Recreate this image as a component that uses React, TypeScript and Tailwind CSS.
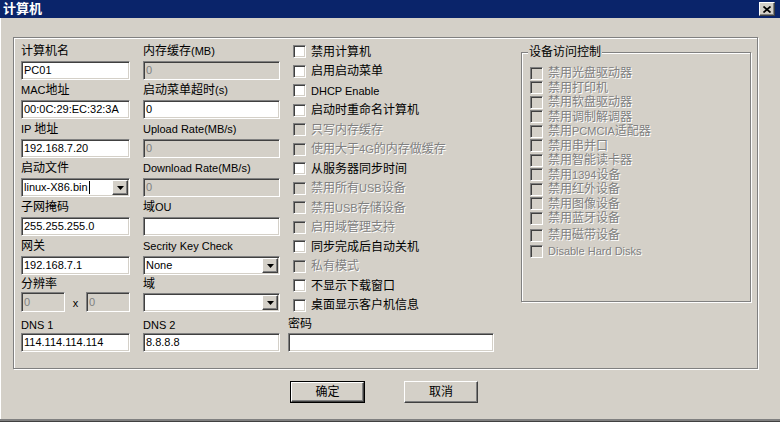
import React from 'react'

const CJK = /([\u2E80-\u9FFF\uFF00-\uFFEF]+)/

const sunken =
  'border border-t-[#808080] border-l-[#808080] border-b-white border-r-white shadow-[inset_1px_1px_0_#404040,inset_-1px_-1px_0_#d4d0c8]'
const raised =
  'border border-t-white border-l-white border-b-[#404040] border-r-[#404040] shadow-[inset_-1px_-1px_0_#808080]'
const etchedBox = 'border border-[#808080] shadow-[inset_1px_1px_0_#fff,1px_1px_0_#fff]'
const grayText = 'text-[#808080] [text-shadow:1px_1px_0_#fff]'

// Chinese in 12px, latin runs in 11px like the old Tahoma/SimSun mix
function T({ s }: { s: string }) {
  return (
    <span className="whitespace-pre">
      {s
        .split(CJK)
        .filter(Boolean)
        .map((p, i) =>
          CJK.test(p) ? (
            <span key={i}>{p}</span>
          ) : (
            <span key={i} className="text-[11px]">
              {p}
            </span>
          ),
        )}
    </span>
  )
}

function TextBox({
  value = '',
  disabled = false,
  className = '',
}: {
  value?: string
  disabled?: boolean
  className?: string
}) {
  return (
    <div
      className={`h-[19px] ${sunken} flex items-center pl-[2px] text-[11px] ${
        disabled ? 'bg-[#d4d0c8] text-[#808080]' : 'bg-white text-black'
      } ${className}`}
    >
      {value}
    </div>
  )
}

function Combo({ value = '', caret = false }: { value?: string; caret?: boolean }) {
  return (
    <div className={`h-[19px] ${sunken} bg-white flex items-stretch p-[1px]`}>
      <div className="flex-1 flex items-center pl-[1px] text-[11px]">
        {value}
        {caret && <span className="w-px h-[13px] bg-black ml-px" />}
      </div>
      <div className={`w-[16px] bg-[#d4d0c8] ${raised} flex items-center justify-center`}>
        <svg width="7" height="4" viewBox="0 0 7 4">
          <polygon points="0,0 7,0 3.5,4" fill="#000" />
        </svg>
      </div>
    </div>
  )
}

function Check({ disabled = false }: { disabled?: boolean }) {
  return (
    <span
      className={`w-[13px] h-[13px] shrink-0 ${sunken} ${disabled ? 'bg-[#d4d0c8]' : 'bg-white'}`}
    />
  )
}

type Cell = { label: string; control: React.ReactNode }

const rows: { lh: string; pad?: string; left: Cell; mid: Cell }[] = [
  {
    lh: 'h-[20px]',
    left: { label: '计算机名', control: <TextBox value="PC01" /> },
    mid: { label: '内存缓存(MB)', control: <TextBox value="0" disabled /> },
  },
  {
    lh: 'h-[20px]',
    left: { label: 'MAC地址', control: <TextBox value="00:0C:29:EC:32:3A" /> },
    mid: { label: '启动菜单超时(s)', control: <TextBox value="0" /> },
  },
  {
    lh: 'h-[20px]',
    left: { label: 'IP 地址', control: <TextBox value="192.168.7.20" /> },
    mid: { label: 'Upload Rate(MB/s)', control: <TextBox value="0" disabled /> },
  },
  {
    lh: 'h-[20px]',
    left: { label: '启动文件', control: <Combo value="linux-X86.bin" caret /> },
    mid: { label: 'Download Rate(MB/s)', control: <TextBox value="0" disabled /> },
  },
  {
    lh: 'h-[20px]',
    left: { label: '子网掩码', control: <TextBox value="255.255.255.0" /> },
    mid: { label: '域OU', control: <TextBox /> },
  },
  {
    lh: 'h-[20px]',
    left: { label: '网关', control: <TextBox value="192.168.7.1" /> },
    mid: { label: 'Secrity Key Check', control: <Combo value="None" /> },
  },
  {
    lh: 'h-[17px]',
    left: {
      label: '分辨率',
      control: (
        <div className="flex items-center h-[20px]">
          <TextBox value="0" disabled className="w-[44px] h-[20px]" />
          <span className="w-[21px] text-center text-[11px] pt-[3px]">x</span>
          <TextBox value="0" disabled className="w-[44px] h-[20px]" />
        </div>
      ),
    },
    mid: {
      label: '域',
      control: (
        <div className="pt-px">
          <Combo />
        </div>
      ),
    },
  },
  {
    lh: 'h-[21px]',
    pad: 'pt-[5px]',
    left: { label: 'DNS 1', control: <TextBox value="114.114.114.114" /> },
    mid: { label: 'DNS 2', control: <TextBox value="8.8.8.8" /> },
  },
]

const options: [string, boolean][] = [
  ['禁用计算机', true],
  ['启用启动菜单', true],
  ['DHCP Enable', true],
  ['启动时重命名计算机', true],
  ['只写内存缓存', false],
  ['使用大于4G的内存做缓存', false],
  ['从服务器同步时间', true],
  ['禁用所有USB设备', false],
  ['禁用USB存储设备', false],
  ['启用域管理支持', false],
  ['同步完成后自动关机', true],
  ['私有模式', false],
  ['不显示下载窗口', true],
  ['桌面显示客户机信息', true],
]

const devices = [
  '禁用光盘驱动器',
  '禁用打印机',
  '禁用软盘驱动器',
  '禁用调制解调器',
  '禁用PCMCIA适配器',
  '禁用串并口',
  '禁用智能读卡器',
  '禁用1394设备',
  '禁用红外设备',
  '禁用图像设备',
  '禁用蓝牙设备',
]

function Column({ side }: { side: 'left' | 'mid' }) {
  return (
    <div className={`flex flex-col ${side === 'left' ? 'w-[109px]' : 'w-[137px]'}`}>
      {rows.map((r, i) => {
        const c = r[side]
        return (
          <div key={i} className="flex flex-col">
            <div className={`${r.lh} ${r.pad ?? ''} flex items-center whitespace-nowrap`}>
              <T s={c.label} />
            </div>
            {c.control}
          </div>
        )
      })}
    </div>
  )
}

export default function App() {
  return (
    <div className="w-[780px] h-[422px] bg-[#d4d0c8] flex flex-col text-[12px] text-black font-['Liberation_Sans','Noto_Sans_CJK_SC',sans-serif] border-b border-[#404040] shadow-[inset_0_-2px_0_#808080,inset_1px_0_0_#fff] overflow-hidden">
      {/* Title bar */}
      <div className="h-[18px] bg-[#0a246a] flex items-center justify-between pl-[3px] pr-[5px] shrink-0">
        <span className="text-white font-bold text-[13px] leading-[18px]">计算机</span>
        <div className={`w-[16px] h-[14px] bg-[#d4d0c8] ${raised} flex items-center justify-center`}>
          <svg width="8" height="7" viewBox="0 0 8 7">
            <path d="M0.5 0.5L7.5 6.5M7.5 0.5L0.5 6.5" stroke="#000" strokeWidth="1.7" />
          </svg>
        </div>
      </div>

      {/* Main panel */}
      <div className={`ml-[13px] mt-[19px] w-[745px] h-[332px] ${etchedBox} pl-[7px] pt-[3px] flex`}>
        <Column side="left" />
        <div className="w-[13px]" />
        <Column side="mid" />
        <div className="w-[8px]" />

        {/* Options */}
        <div className="w-[206px] flex flex-col mt-px">
          {options.map(([label, enabled]) => (
            <div key={label} className="h-[19.5px] flex items-center gap-[5px] pl-[5px] whitespace-nowrap">
              <Check disabled={!enabled} />
              <span className={enabled ? 'text-black' : grayText}>
                <T s={label} />
              </span>
            </div>
          ))}
          <div className="h-[18px] flex items-center">密码</div>
          <TextBox />
        </div>
        <div className="w-[27px]" />

        {/* Device access group */}
        <div className={`relative mt-[11px] w-[230px] h-[250px] ${etchedBox} pt-[13px] pl-[8px]`}>
          <span className="absolute -top-[8px] left-[6px] px-[1px] leading-[14px] bg-[#d4d0c8]">
            设备访问控制
          </span>
          {devices.map((d) => (
            <div key={d} className="h-[14.5px] flex items-center gap-[5px] whitespace-nowrap">
              <Check disabled />
              <span className={grayText}>
                <T s={d} />
              </span>
            </div>
          ))}
          <div className="h-[14.5px] mt-[2.5px] flex items-center gap-[5px]">
            <Check disabled />
            <span className={grayText}>禁用磁带设备</span>
          </div>
          <div className="h-[14.5px] mt-[1.5px] flex items-center gap-[5px]">
            <Check disabled />
            <span className={`${grayText} text-[11px]`}>Disable Hard Disks</span>
          </div>
        </div>
      </div>

      {/* Buttons */}
      <div className="flex mt-[12px] pl-[290px] gap-[39px]">
        <div className="w-[75px] h-[22px] border border-black">
          <div className={`w-full h-full ${raised} flex items-center justify-center`}>确定</div>
        </div>
        <div className={`w-[74px] h-[22px] ${raised} flex items-center justify-center`}>取消</div>
      </div>
    </div>
  )
}
